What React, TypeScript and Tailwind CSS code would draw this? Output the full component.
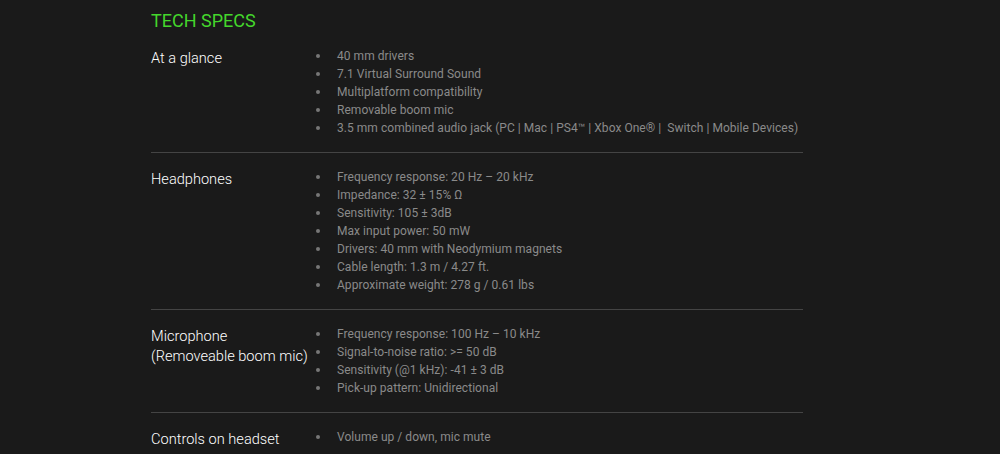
import React from "react";

const sections: { label: string[]; items: string[] }[] = [
  {
    label: ["At a glance"],
    items: [
      "40 mm drivers",
      "7.1 Virtual Surround Sound",
      "Multiplatform compatibility",
      "Removable boom mic",
      "3.5 mm combined audio jack (PC | Mac | PS4™ | Xbox One® |\u00a0 Switch | Mobile Devices)",
    ],
  },
  {
    label: ["Headphones"],
    items: [
      "Frequency response: 20 Hz – 20 kHz",
      "Impedance: 32 ± 15% Ω",
      "Sensitivity: 105 ± 3dB",
      "Max input power: 50 mW",
      "Drivers: 40 mm with Neodymium magnets",
      "Cable length: 1.3 m / 4.27 ft.",
      "Approximate weight: 278 g / 0.61 lbs",
    ],
  },
  {
    label: ["Microphone", "(Removeable boom mic)"],
    items: [
      "Frequency response: 100 Hz – 10 kHz",
      "Signal-to-noise ratio: >= 50 dB",
      "Sensitivity (@1 kHz): -41 ± 3 dB",
      "Pick-up pattern: Unidirectional",
    ],
  },
  {
    label: ["Controls on headset"],
    items: ["Volume up / down, mic mute"],
  },
];

export default function App() {
  return (
    <div className="w-[1000px] h-[454px] overflow-hidden bg-[#1a1a1a]">
      <div className="ml-[151px] w-[652px]">
        <h2 className="pt-[10px] text-[18px] leading-[22px] text-[#44d62c] font-['Roboto',sans-serif] font-normal">
          TECH SPECS
        </h2>
        <div className="mt-[15px]">
          {sections.map((s, i) => (
            <div
              key={i}
              className={`flex ${i > 0 ? "border-t border-[#444444] pt-[15px]" : ""} ${
                i < sections.length - 1 ? "pb-[15px]" : ""
              }`}
            >
              <div className="w-[165px] shrink-0 pt-[1px] whitespace-nowrap text-[14.6px] leading-[20px] text-white font-['Roboto',sans-serif] font-light">
                {s.label.map((l, j) => (
                  <div key={j}>{l}</div>
                ))}
              </div>
              <ul className="flex flex-col">
                {s.items.map((it, j) => (
                  <li
                    key={j}
                    className="flex items-center h-[18px] text-[12px] leading-[18px] tracking-[0.04px] text-[#8a8a8a] font-['Roboto',sans-serif]"
                  >
                    <span className="w-[4px] h-[4px] rounded-full bg-[#777777] shrink-0" />
                    <span className="ml-[17px] whitespace-pre">{it}</span>
                  </li>
                ))}
              </ul>
            </div>
          ))}
        </div>
      </div>
    </div>
  );
}
